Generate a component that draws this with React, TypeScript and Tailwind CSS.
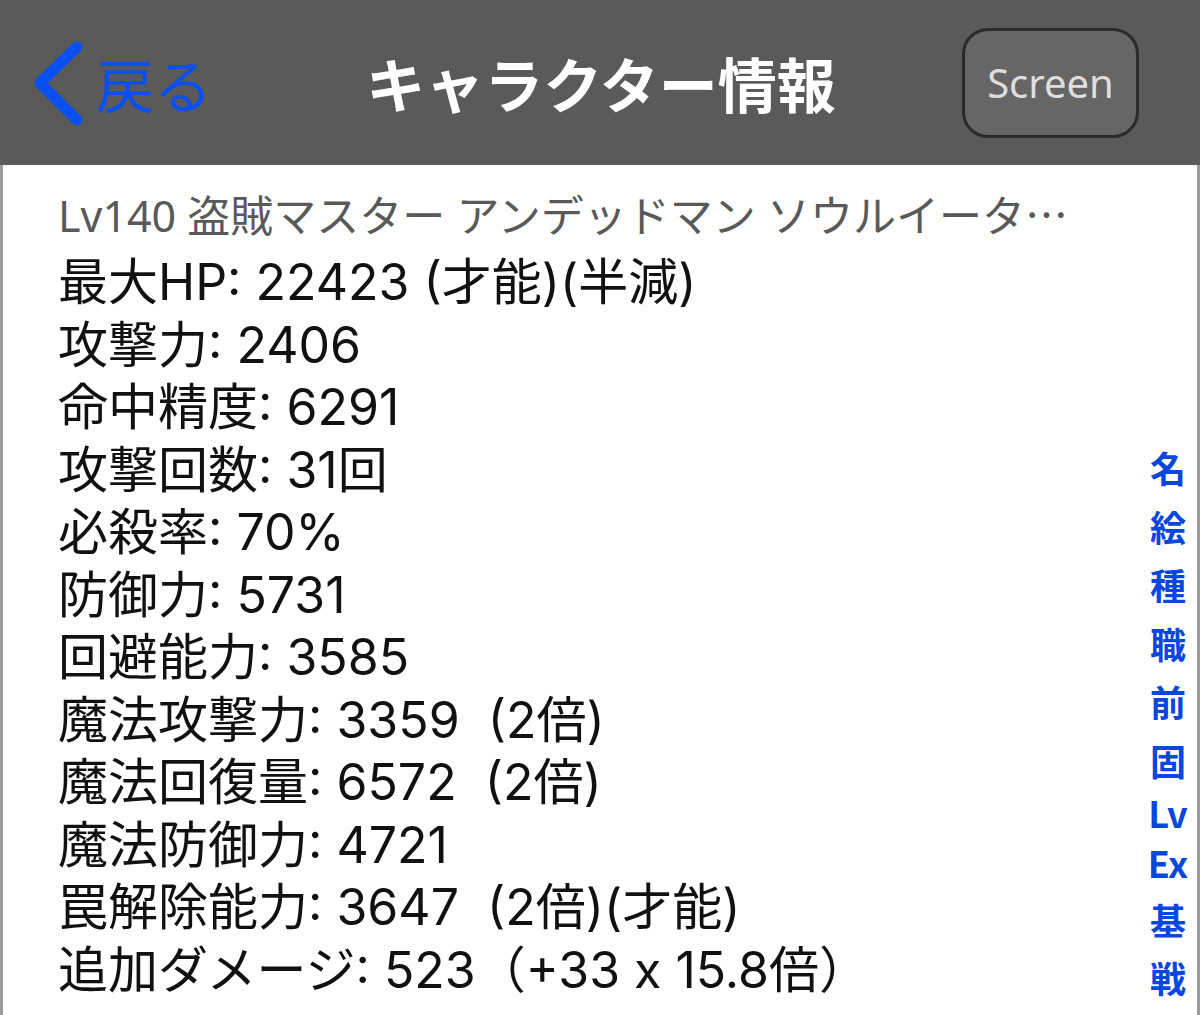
import React from "react";

const stats: string[] = [
  "最大HP: 22423 (才能)(半減)",
  "攻撃力: 2406",
  "命中精度: 6291",
  "攻撃回数: 31回",
  "必殺率: 70%",
  "防御力: 5731",
  "回避能力: 3585",
  "魔法攻撃力: 3359\u00a0\u00a0(2倍)",
  "魔法回復量: 6572\u00a0\u00a0(2倍)",
  "魔法防御力: 4721",
  "罠解除能力: 3647\u00a0\u00a0(2倍)(才能)",
  "追加ダメージ: 523（+33 x 15.8倍）",
];

const index: { t: string; latin?: boolean }[] = [
  { t: "名" },
  { t: "絵" },
  { t: "種" },
  { t: "職" },
  { t: "前" },
  { t: "固" },
  { t: "Lv", latin: true },
  { t: "Ex", latin: true },
  { t: "基" },
  { t: "戦" },
];

export default function App() {
  return (
    <div className="w-[1200px] h-[1015px] overflow-hidden bg-white">
      <header className="h-[165px] bg-[#5a5a5a] grid grid-cols-[1fr_auto_1fr] items-center">
        <div className="flex items-center pl-[30px]">
          <svg width="56" height="90" viewBox="0 0 56 90" className="shrink-0">
            <path
              d="M47 9 L10 45 L47 82"
              fill="none"
              stroke="#0a4ff0"
              strokeWidth="11"
              strokeLinecap="round"
              strokeLinejoin="round"
            />
          </svg>
          <span
            className="ml-[10px] text-[58px] leading-none text-[#0a4ff0]"
            style={{ fontFamily: '"Noto Sans CJK JP", sans-serif' }}
          >
            戻る
          </span>
        </div>
        <h1
          className="pl-[2px] text-[59px] font-bold leading-none text-white"
          style={{ fontFamily: '"Noto Sans CJK JP", sans-serif' }}
        >
          キャラクター情報
        </h1>
        <div className="flex justify-end pr-[61px]">
          <div
            className="w-[177px] h-[110px] rounded-[26px] border-[3px] border-[#2b2b2b] bg-[#666666] flex items-center justify-center text-[40px] text-[#dedede]"
            style={{ fontFamily: '"Noto Sans", sans-serif' }}
          >
            Screen
          </div>
        </div>
      </header>
      <main className="flex h-[850px] border-x-[3px] border-[#9a9a9a]">
        <div className="flex-1 pl-[55px] pt-[13px]">
          <div
            className="text-[43px] leading-[70px] text-[#595959] whitespace-nowrap"
            style={{ fontFamily: '"Noto Sans", "Noto Sans CJK JP", sans-serif' }}
          >
            Lv140 盗賊マスター アンデッドマン ソウルイータ
            <span style={{ fontFamily: '"Noto Sans CJK JP", sans-serif' }}>…</span>
          </div>
          <div
            className="text-[50px] leading-[62.5px] text-[#111111]"
            style={{ fontFamily: 'Inter, "Noto Sans CJK JP", sans-serif' }}
          >
            {stats.map((s) => (
              <div key={s} className="whitespace-pre">
                {s}
              </div>
            ))}
          </div>
        </div>
        <nav
          className="w-[58px] pt-[273px] flex flex-col items-center text-[36px] font-bold text-[#0b47dc]"
          style={{ fontFamily: '"Noto Sans CJK JP", sans-serif' }}
        >
          {index.map((i) => (
            <div
              key={i.t}
              className={
                i.latin
                  ? "h-[50px] leading-[44px] w-full text-center"
                  : "h-[58.6px] leading-[58.6px] w-full text-center"
              }
            >
              {i.t}
            </div>
          ))}
        </nav>
      </main>
    </div>
  );
}
